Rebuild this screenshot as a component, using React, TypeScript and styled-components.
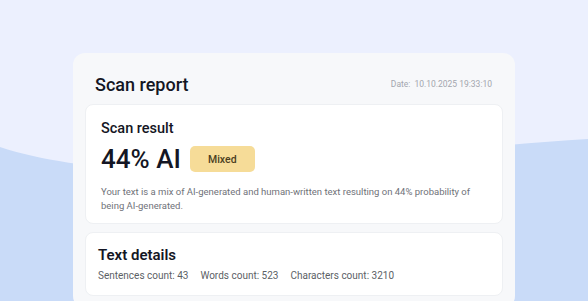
import styled, {createGlobalStyle} from "styled-components";

const GlobalStyle = createGlobalStyle`
	html, body {
		margin: 0;
		padding: 0;
		background: #ecf0fe;
		font-family: Roboto, "Noto Sans", sans-serif;
		color: #161826;
	}
`;

const StyledPage = styled.div`
	position: relative;
	width: 588px;
	height: 301px;
	overflow: hidden;
	background: #ecf0fe;
`;

const StyledWave = styled.svg`
	position: absolute;
	left: 0;
	top: 0;
	z-index: 0;
`;

const StyledReport = styled.section`
	position: relative;
	z-index: 1;
	width: 442px;
	margin: 53px 0 0 73px;
	padding: 0 12px 12px;
	box-sizing: border-box;
	background: #f7f8fa;
	border-radius: 12px;
	display: flex;
	flex-direction: column;
	gap: 8px;
`;

const StyledHeader = styled.div`
	display: flex;
	align-items: flex-end;
	justify-content: space-between;
	height: 43px;
	padding: 0 11px 0 10px;
`;

const StyledTitle = styled.h1`
	margin: 0;
	font-size: 18px;
	line-height: 22px;
	font-weight: 500;
	color: #141624;
`;

const StyledDate = styled.div`
	font-size: 8.5px;
	color: #a3a6ae;
	margin-bottom: 7px;
	display: flex;
	gap: 4px;
`;

const StyledPanel = styled.div<{$pad: string}>`
	background: #ffffff;
	border: 1px solid #eef0f3;
	border-radius: 8px;
	padding: ${p => p.$pad};
	display: flex;
	flex-direction: column;
`;

const StyledPanelTitle = styled.h2<{$size: number; $weight: number}>`
	margin: 0;
	font-size: ${p => p.$size}px;
	font-weight: ${p => p.$weight};
	line-height: 1.2;
	color: #141624;
`;

const StyledScoreRow = styled.div`
	display: flex;
	align-items: center;
	gap: 9px;
	margin-top: 7px;
`;

const StyledScore = styled.div`
	font-size: 26px;
	line-height: 30px;
	font-weight: 500;
	color: #141624;
`;

const StyledBadge = styled.span`
	display: inline-flex;
	align-items: center;
	justify-content: center;
	width: 65px;
	height: 26px;
	border-radius: 5px;
	background: #f6dc98;
	font-size: 10.5px;
	font-weight: 500;
	color: #4b3f22;
`;

const StyledText = styled.p`
	margin: 11px 0 0;
	font-size: 9.5px;
	line-height: 13.5px;
	color: #6f7279;
	max-width: 392px;
`;

const StyledStats = styled.div`
	display: flex;
	gap: 12px;
	margin-top: 6px;
	font-size: 10px;
	color: #5c5f66;
`;

export default function App() {
	return (
		<StyledPage>
			<GlobalStyle />
			<StyledWave width="588" height="301" viewBox="0 0 588 301">
				<path d="M0,147 C40,160 90,168 160,170 C300,170 450,147 588,139 L588,301 L0,301 Z" fill="#c9dbf8" />
			</StyledWave>
			<StyledReport>
				<StyledHeader>
					<StyledTitle>Scan report</StyledTitle>
					<StyledDate>
						<span>Date:</span>
						<span>10.10.2025 19:33:10</span>
					</StyledDate>
				</StyledHeader>
				<StyledPanel $pad="15px 15px 11px 15px">
					<StyledPanelTitle $size={14.5} $weight={500}>Scan result</StyledPanelTitle>
					<StyledScoreRow>
						<StyledScore>44% AI</StyledScore>
						<StyledBadge>Mixed</StyledBadge>
					</StyledScoreRow>
					<StyledText>
						Your text is a mix of AI-generated and human-written text resulting on 44% probability of being AI-generated.
					</StyledText>
				</StyledPanel>
				<StyledPanel $pad="13px 12px 14px 12px">
					<StyledPanelTitle $size={15} $weight={600}>Text details</StyledPanelTitle>
					<StyledStats>
						<span>Sentences count: 43</span>
						<span>Words count: 523</span>
						<span>Characters count: 3210</span>
					</StyledStats>
				</StyledPanel>
			</StyledReport>
		</StyledPage>
	);
}
